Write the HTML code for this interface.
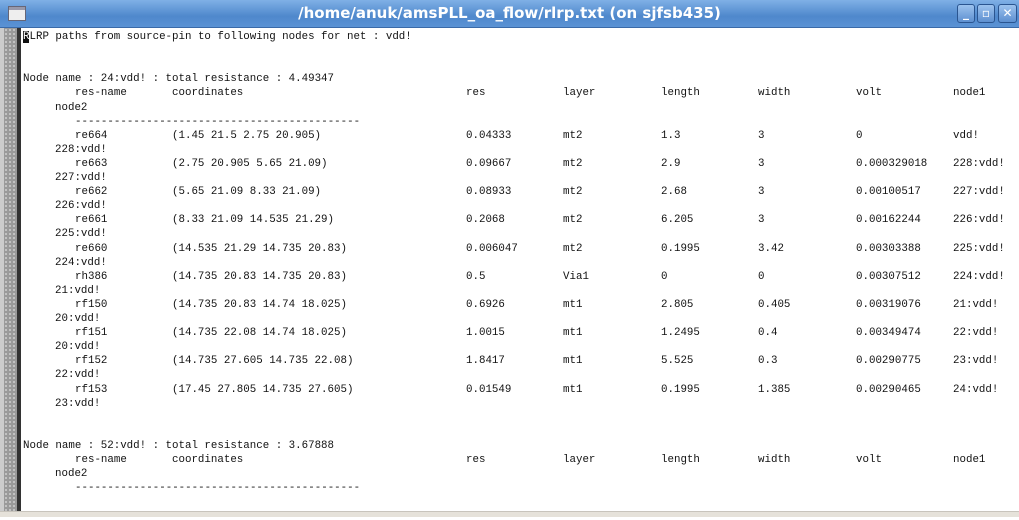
<!DOCTYPE html>
<html><head><meta charset="utf-8"><style>
body{margin:0;width:1019px;height:520px;overflow:hidden;background:#fff;position:relative;font-family:"Liberation Mono",monospace;}
.tb{position:absolute;left:0;top:0;width:1019px;height:27px;background:linear-gradient(#7fb0e6,#4f88cc 60%,#5a92d4);border-bottom:1px solid #3a6aa8;}
.tt{position:absolute;left:0;width:1019px;top:4px;text-align:center;color:#fff;font:bold 15px "DejaVu Sans","Liberation Sans",sans-serif;}
.ic{position:absolute;left:8px;top:6px;width:16px;height:13px;background:#eee;border:1px solid #667;}
.ic:before{content:"";position:absolute;left:0;top:0;width:16px;height:3px;background:#99a;}
.bt{position:absolute;top:4px;width:16px;height:17px;border:1px solid #2a5590;border-radius:3px;background:linear-gradient(#9cc2ee,#5d8fd0);color:#fff;font:bold 12px "DejaVu Sans",sans-serif;text-align:center;line-height:17px;}
.sb{position:absolute;left:0;top:28px;width:17px;height:484px;background:#9a9a9a;background-image:radial-gradient(#d0d0d0 0.8px,transparent 1px);background-size:4px 4px;border-left:4px solid #ccc;box-sizing:border-box;}
.sl{position:absolute;left:17px;top:28px;width:4px;height:484px;background:#333;}
.bb{position:absolute;left:0;top:511px;width:1019px;height:5px;background:#e6e2da;border-top:1px solid #c8c4bc;}
.l{position:absolute;font-size:10.8px;line-height:14px;color:#111;white-space:pre;}
</style></head><body>
<div class="tb"><div class="ic"></div><div class="tt">/home/anuk/amsPLL_oa_flow/rlrp.txt (on sjfsb435)</div>
<div class="bt" style="left:957px">_</div><div class="bt" style="left:977px">▫</div><div class="bt" style="left:998px;width:17px">✕</div></div>
<div class="sb"></div><div class="sl"></div>
<div id="c"></div>
<div class="bb"></div>
<script>
var c=document.getElementById('c'),h='';
function L(i,x,t){h+='<div class="l" style="left:'+x+'px;top:'+Math.round(30+14.1*(i-1))+'px">'+t+'</div>';}
L(1,23,'<span style="background:#111;color:#fff">R</span>LRP paths from source-pin to following nodes for net : vdd!');
var X=[466,563,661,758,856,953];
function hdr(s,name){L(s,23,name);L(s+1,75,'res-name');L(s+1,172,'coordinates');['res','layer','length','width','volt','node1'].forEach(function(t,k){L(s+1,X[k],t)});L(s+2,55,'node2');L(s+3,75,'--------------------------------------------');}
hdr(4,'Node name : 24:vdd! : total resistance : 4.49347');
var R=[
['re664','(1.45 21.5 2.75 20.905)','0.04333','mt2','1.3','3','0','vdd!','228:vdd!'],
['re663','(2.75 20.905 5.65 21.09)','0.09667','mt2','2.9','3','0.000329018','228:vdd!','227:vdd!'],
['re662','(5.65 21.09 8.33 21.09)','0.08933','mt2','2.68','3','0.00100517','227:vdd!','226:vdd!'],
['re661','(8.33 21.09 14.535 21.29)','0.2068','mt2','6.205','3','0.00162244','226:vdd!','225:vdd!'],
['re660','(14.535 21.29 14.735 20.83)','0.006047','mt2','0.1995','3.42','0.00303388','225:vdd!','224:vdd!'],
['rh386','(14.735 20.83 14.735 20.83)','0.5','Via1','0','0','0.00307512','224:vdd!','21:vdd!'],
['rf150','(14.735 20.83 14.74 18.025)','0.6926','mt1','2.805','0.405','0.00319076','21:vdd!','20:vdd!'],
['rf151','(14.735 22.08 14.74 18.025)','1.0015','mt1','1.2495','0.4','0.00349474','22:vdd!','20:vdd!'],
['rf152','(14.735 27.605 14.735 22.08)','1.8417','mt1','5.525','0.3','0.00290775','23:vdd!','22:vdd!'],
['rf153','(17.45 27.805 14.735 27.605)','0.01549','mt1','0.1995','1.385','0.00290465','24:vdd!','23:vdd!']];
R.forEach(function(r,j){var i=8+2*j;L(i,75,r[0]);L(i,172,r[1]);for(var k=0;k<6;k++)L(i,X[k],r[2+k]);L(i+1,55,r[8]);});
hdr(30,'Node name : 52:vdd! : total resistance : 3.67888');
c.innerHTML=h;
</script>
</body></html>
